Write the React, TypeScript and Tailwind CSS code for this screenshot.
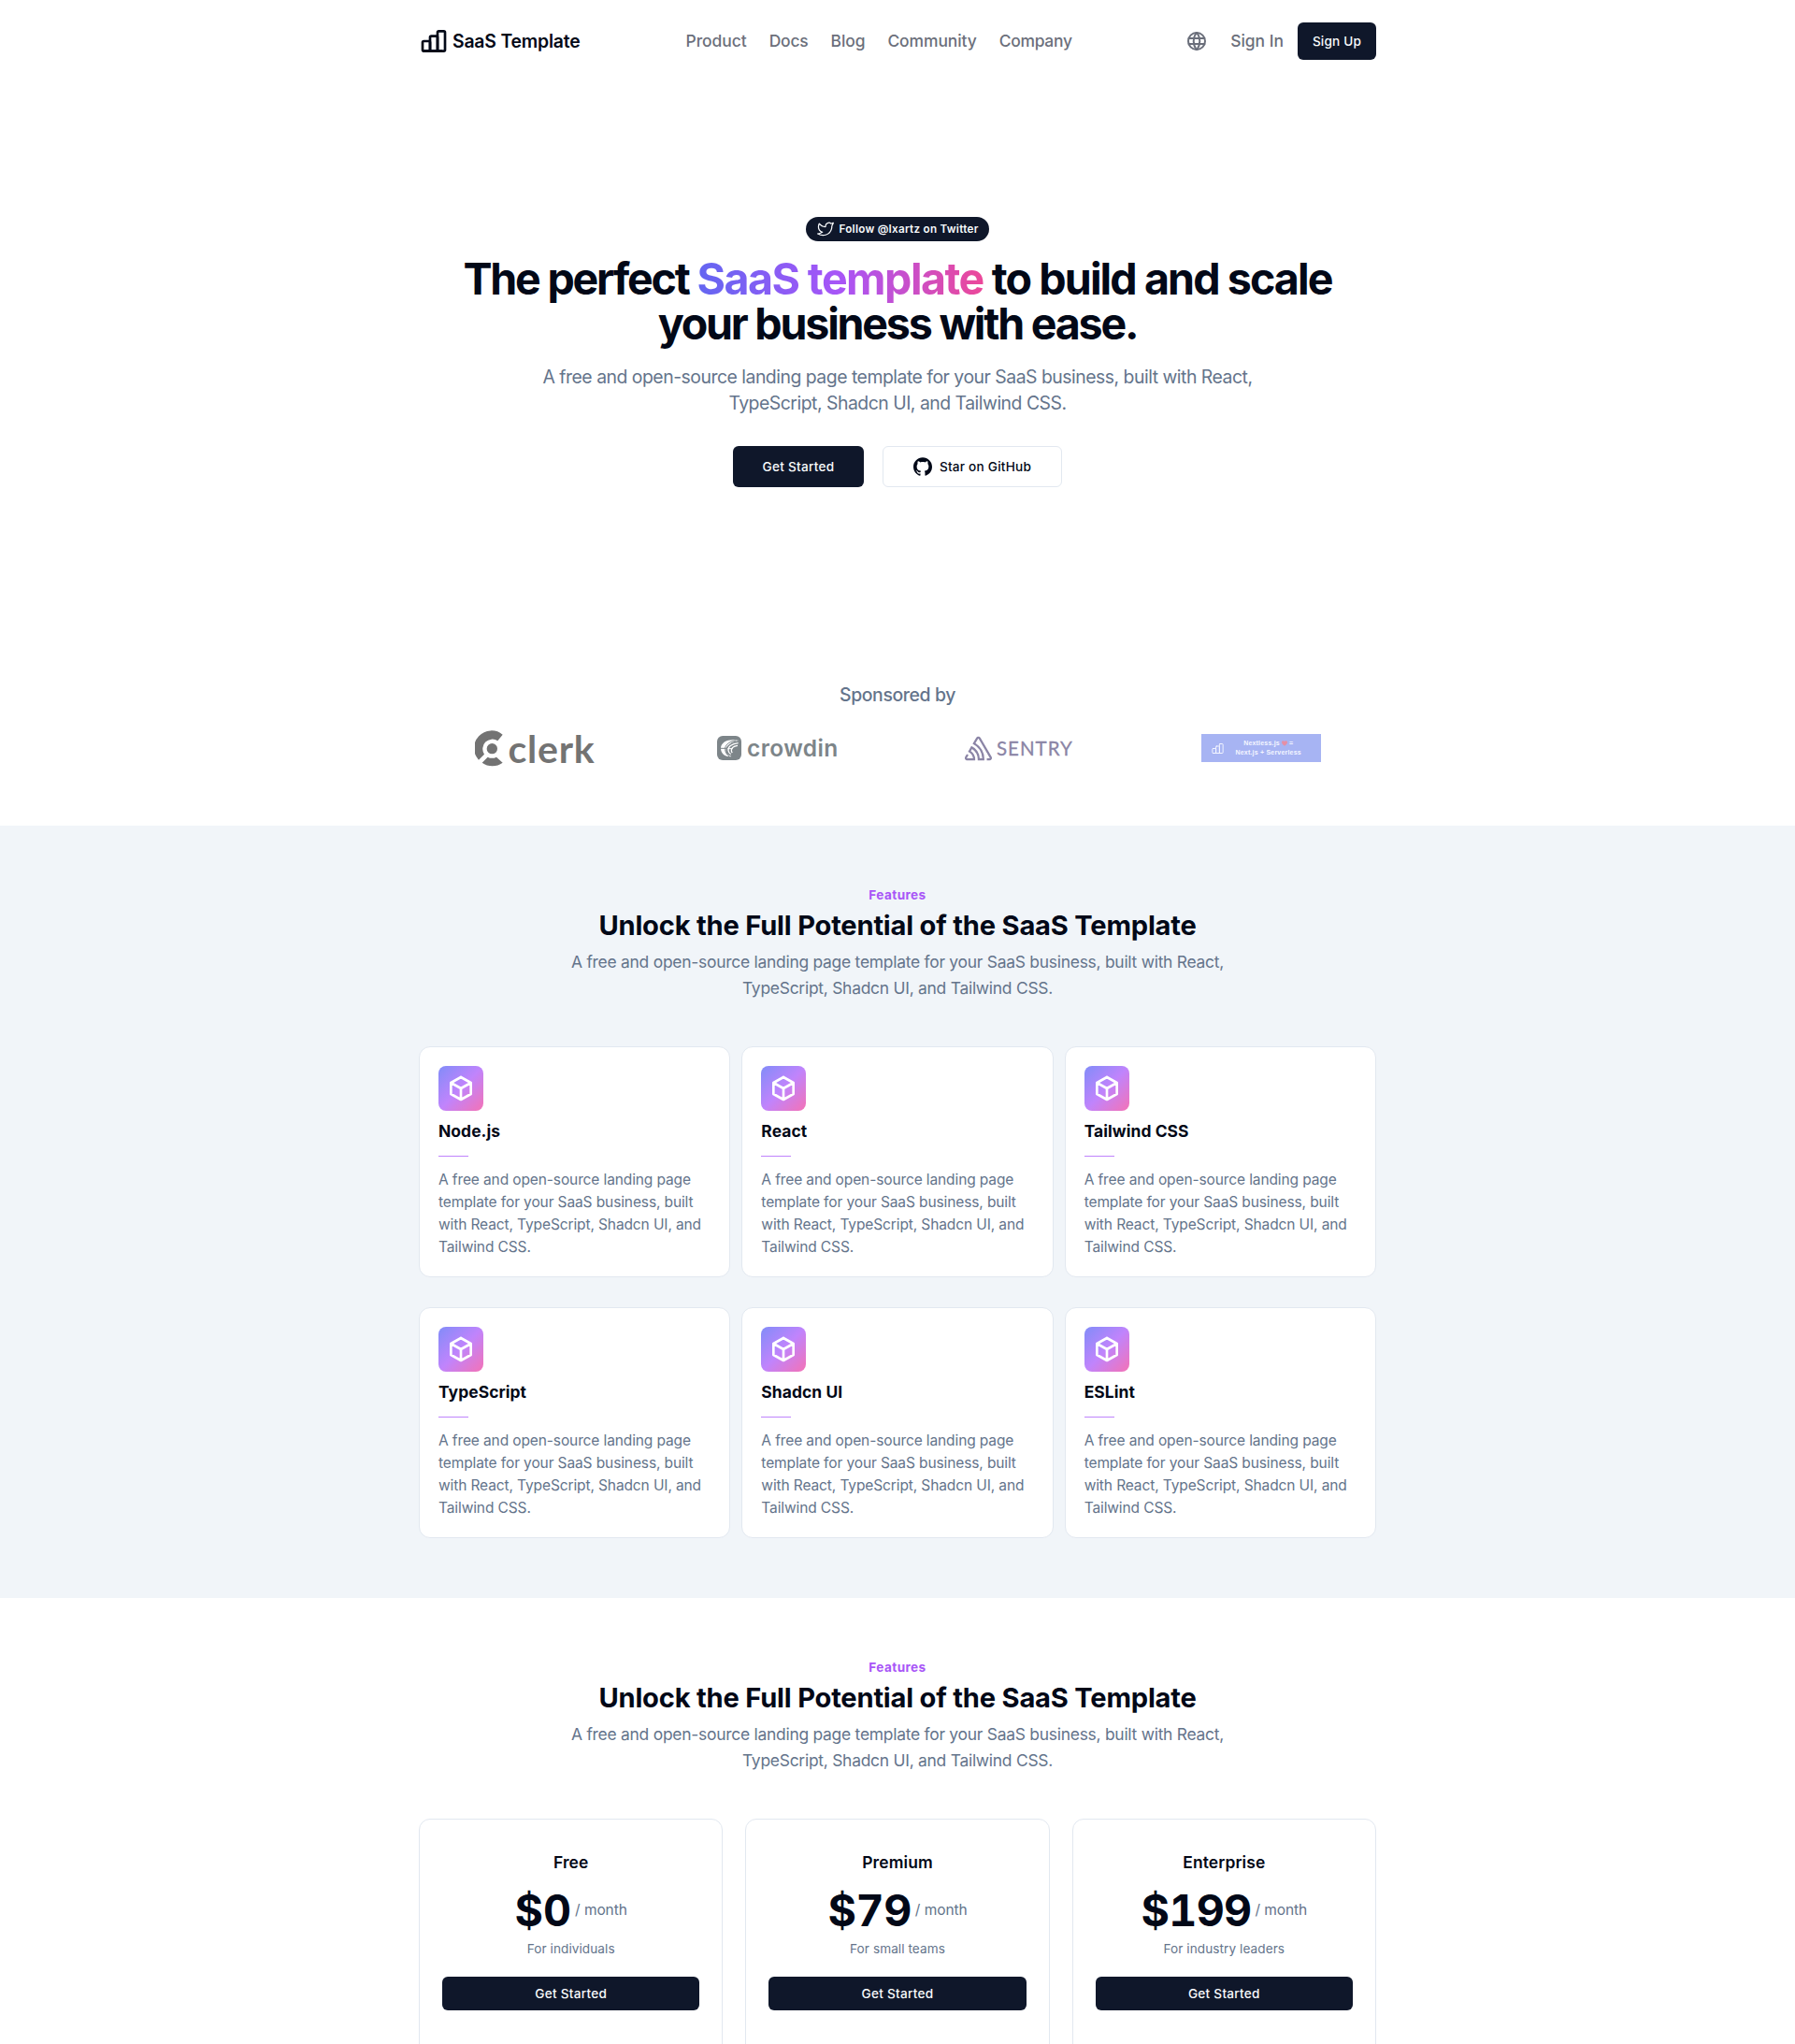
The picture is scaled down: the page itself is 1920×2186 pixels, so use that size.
import React from "react";
import type { ReactNode } from "react";
import { SiGithub, SiSentry } from "react-icons/si";

const NAV = [
  { label: "Product", cls: "tracking-[-0.04px]" },
  { label: "Docs", cls: "tracking-[-0.15px]" },
  { label: "Blog", cls: "tracking-[-0.1px]" },
  { label: "Community", cls: "tracking-[-0.08px]" },
  { label: "Company", cls: "tracking-[-0.27px]" },
];

const FEATURES = ["Node.js", "React", "Tailwind CSS", "TypeScript", "Shadcn UI", "ESLint"];

const PLANS = [
  { name: "Free", price: "$0", note: "For individuals", cls: "tracking-[0px]" },
  { name: "Premium", price: "$79", note: "For small teams", cls: "tracking-[-0.4px]" },
  { name: "Enterprise", price: "$199", note: "For industry leaders", cls: "tracking-[-0.7px]" },
];

function BarsIcon({ className }: { className: string }) {
  return (
    <svg
      className={className}
      viewBox="0 0 24 24"
      fill="none"
      stroke="currentColor"
      strokeWidth="2"
      strokeLinecap="round"
      strokeLinejoin="round"
    >
      <rect x="3" y="12" width="6" height="8" rx="1" />
      <rect x="9" y="8" width="6" height="12" rx="1" />
      <rect x="15" y="4" width="6" height="16" rx="1" />
      <path d="M4 20h14" />
    </svg>
  );
}

function GlobeIcon() {
  return (
    <svg
      className="size-6"
      viewBox="0 0 24 24"
      fill="none"
      stroke="currentColor"
      strokeWidth="2"
      strokeLinecap="round"
      strokeLinejoin="round"
    >
      <circle cx="12" cy="12" r="9" />
      <path d="M3.6 9h16.8M3.6 15h16.8M11.5 3a17 17 0 0 0 0 18M12.5 3a17 17 0 0 1 0 18" />
    </svg>
  );
}

function TwitterIcon() {
  return (
    <svg
      className="mr-1 size-5"
      viewBox="0 0 24 24"
      fill="none"
      stroke="currentColor"
      strokeWidth="1.5"
      strokeLinecap="round"
      strokeLinejoin="round"
    >
      <path d="M22 4.01c-1 .49-1.98.689-3 .99-1.121-1.265-2.783-1.335-4.38-.737S11.977 6.323 12 8v1c-3.245.083-6.135-1.395-8-4 0 0-4.182 7.433 4 11-1.872 1.247-3.739 2.088-6 2 3.308 1.803 6.913 2.423 10.034 1.517 3.58-1.04 6.522-3.723 7.651-7.742a13.84 13.84 0 0 0 .497-3.753C20.18 7.773 21.692 5.25 22 4.009z" />
    </svg>
  );
}

function BoxIcon() {
  return (
    <svg
      className="size-8"
      viewBox="0 0 24 24"
      fill="none"
      stroke="currentColor"
      strokeWidth="2"
      strokeLinecap="round"
      strokeLinejoin="round"
    >
      <path d="M12 3l8 4.5v9L12 21l-8-4.5v-9L12 3M12 12l8-4.5M12 12v9M12 12L4 7.5" />
    </svg>
  );
}

function ClerkLogo() {
  return (
    <div className="flex h-10 w-32 items-center text-[#737373]">
      <svg className="h-10 w-[30px] shrink-0" viewBox="84 180 90 120" fill="currentColor">
        <path d="M173 197A56 56 0 0 0 96 278L114 260A31 31 0 0 1 157 217Z" />
        <path d="M107 287L125 269A31 31 0 0 0 153 269L173 287A56 56 0 0 1 107 287Z" />
        <circle cx="139" cy="242" r="17" />
      </svg>
      <span className="ml-[6px] pt-[1px] font-['Lato'] text-[41px] leading-10 font-bold tracking-[0.8px]">
        clerk
      </span>
    </div>
  );
}

function CrowdinLogo() {
  return (
    <div className="flex h-10 w-32 items-center text-[#7d8589]">
      <svg className="size-[26px] shrink-0" viewBox="0 0 78 78">
        <rect width="78" height="78" rx="18" fill="currentColor" />
        <path
          d="M70 15C40 8 12 18 12 40c0 17 13 27 32 27l2-2C28 62 24 46 32 34c8-11 22-17 38-19z"
          fill="#fff"
        />
        <path d="M12 40h22" stroke="currentColor" strokeWidth="3" />
        <path
          d="M60 15C36 18 24 32 26 44c1 10 5 16 14 22"
          fill="none"
          stroke="currentColor"
          strokeWidth="3"
        />
        <path
          d="M68 23C46 25 34 36 36 47c1 6 3 9 8 12M66 31c-14 2-21 8-20 17 0 2 1 4 3 6"
          fill="none"
          stroke="#fff"
          strokeWidth="4"
        />
        <path d="M34 41h16" stroke="#fff" strokeWidth="3" />
      </svg>
      <span className="ml-[6.500px] text-[24.5px] leading-10 font-semibold tracking-[0.4px]">crowdin</span>
    </div>
  );
}

function SentryLogo() {
  return (
    <div className="flex h-10 w-32 items-center pl-[6px] text-[#8b85a6]">
      <SiSentry className="size-[29px] shrink-0" />
      <span className="ml-[5.500px] font-['Lato'] text-[20.5px] leading-10 tracking-[1px] [-webkit-text-stroke:0.3px_currentColor]">
        SENTRY
      </span>
    </div>
  );
}

function NextlessBanner() {
  return (
    <div className="flex h-[30px] w-32 items-center bg-[#a7b4f3] text-[#f4f6ff]">
      <BarsIcon className="ml-[10px] size-[15px] shrink-0 [stroke-width:1.5px]" />
      <div className="ml-[12px] font-['Liberation_Sans'] text-[7px] leading-[10.3px] font-bold tracking-[0.2px] whitespace-nowrap">
        <div className="flex items-center justify-center">
          Nextless.js
          <svg className="mx-[2px] size-[6px]" viewBox="0 0 24 22" fill="#e58fa6">
            <path d="M12 22C4 15 0 11 0 6.500a6.500 6.500 0 0 1 12-3.500 6.500 6.500 0 0 1 12 3.500C24 11 20 15 12 22z" />
          </svg>
          =
        </div>
        <div>Next.js + Serverless</div>
      </div>
    </div>
  );
}

function SectionHeader() {
  return (
    <div className="mb-12 flex flex-col items-center text-center">
      <div className="text-[13.6px] leading-5 font-bold tracking-[0.4px] text-[#a855f7]">Features</div>
      <h2 className="mt-[5px] text-[29.1px] leading-9 font-bold tracking-[-0.2px]">
        Unlock the Full Potential of the SaaS Template
      </h2>
      <p className="mt-[7px] w-[720px] text-[17.46px] leading-7 tracking-[-0.26px] text-[#64748b]">
        A free and open-source landing page template for your SaaS business, built with React,
        <br />
        TypeScript, Shadcn UI, and Tailwind CSS.
      </p>
    </div>
  );
}

function Section({ className, children }: { className: string; children: ReactNode }) {
  return (
    <section className={className}>
      <div className="mx-auto w-[1024px]">
        <SectionHeader />
        {children}
      </div>
    </section>
  );
}

export default function App() {
  return (
    <div className="h-[2186px] w-[1920px] overflow-hidden bg-white font-['Inter',sans-serif] text-[#020817] antialiased">
      <header className="mx-auto flex h-[88px] w-[1024px] items-center">
        <div className="flex w-[285.5px] shrink-0 items-center">
          <BarsIcon className="mr-1 size-8" />
          <span className="text-[19.4px] leading-7 font-semibold tracking-[-0.2px]">SaaS Template</span>
        </div>
        <nav className="flex items-center gap-6 text-[17.46px] leading-7 font-[450] text-[#6b6f7b]">
          {NAV.map((n) => (
            <a key={n.label} className={n.cls}>
              {n.label}
            </a>
          ))}
        </nav>
        <div className="ml-auto flex items-center text-[#6b6f7b]">
          <GlobeIcon />
          <a className="ml-6 text-[17.46px] leading-7 font-[450] tracking-[0px]">Sign In</a>
          <button className="ml-[15px] h-10 w-[84px] rounded-md bg-[#0f172a] text-[13.6px] font-medium tracking-[0.19px] text-[#f8fafc]">
            Sign Up
          </button>
        </div>
      </header>

      <section className="flex h-[641px] flex-col items-center pt-36 text-center">
        <div className="flex h-[26px] w-[196px] items-center justify-center rounded-full bg-[#0f172a] text-[11.7px] font-semibold tracking-[0.26px] whitespace-nowrap text-[#f8fafc]">
          <TwitterIcon />
          <span className="pt-px">Follow @Ixartz on Twitter</span>
        </div>
        <h1 className="mt-4 text-[46.56px] leading-[48px] font-bold">
          <div className="tracking-[-1.89px]">
            <span className="tracking-[-2.2px]">The perfect </span>
            <span className="bg-[linear-gradient(to_right,#6366f1,#a855f7,#ec4899)] bg-clip-text tracking-[-1.53px] text-transparent">
              SaaS template
            </span>{" "}
            to build and scale
          </div>
          <div className="tracking-[-2.2px]">your business with ease.</div>
        </h1>
        <p className="mt-[19px] text-[19.4px] leading-7 tracking-[-0.49px] text-[#64748b]">
          A free and open-source landing page template for your SaaS business, built with React,
          <br />
          TypeScript, Shadcn UI, and Tailwind CSS.
        </p>
        <div className="mt-8 flex gap-5 text-[13.6px] font-medium">
          <button className="h-11 w-[140px] rounded-md bg-[#0f172a] tracking-[0.26px] text-[#f8fafc]">
            Get Started
          </button>
          <button className="flex h-11 w-48 items-center justify-center rounded-md border border-[#e2e8f0] tracking-[0.22px]">
            <SiGithub className="mr-2 size-5" />
            Star on GitHub
          </button>
        </div>
      </section>

      <section className="mx-auto h-[154px] w-[1024px]">
        <div className="text-center text-[19.4px] leading-7 font-medium tracking-[-0.38px] text-[#64748b]">
          Sponsored by
        </div>
        <div className="mt-[23px] grid grid-cols-4 place-items-center gap-3">
          <ClerkLogo />
          <CrowdinLogo />
          <SentryLogo />
          <NextlessBanner />
        </div>
      </section>

      <Section className="bg-[#f1f5f9] py-16">
        <div className="grid grid-cols-3 gap-x-3 gap-y-8">
          {FEATURES.map((f) => (
            <div key={f} className="rounded-xl border border-[#e2e8f0] bg-white p-5">
              <div className="flex size-12 items-center justify-center rounded-lg bg-[linear-gradient(to_bottom_right,#818cf8,#c084fc,#f472b6)] text-white">
                <BoxIcon />
              </div>
              <div className="mt-2 text-[17.46px] leading-7 font-bold tracking-[0.06px]">{f}</div>
              <div className="mt-3 mb-[13px] h-px w-8 bg-[#c084fc]" />
              <p className="-mb-px text-[15.52px] leading-6 tracking-[-0.12px] text-[#64748b]">
                A free and open-source landing page
                <br />
                template for your SaaS business, built
                <br />
                with React, TypeScript, Shadcn UI, and
                <br />
                Tailwind CSS.
              </p>
            </div>
          ))}
        </div>
      </Section>

      <Section className="py-16">
        <div className="grid grid-cols-3 gap-6">
          {PLANS.map((p) => (
            <div
              key={p.name}
              className="h-[400px] rounded-xl border border-[#e2e8f0] px-6 py-8 text-center"
            >
              <div className="text-[17.46px] leading-7 font-semibold tracking-[0.1px]">{p.name}</div>
              <div className="mt-[13px] flex h-12 items-center justify-center">
                <span className={`${p.cls} text-[46.56px] leading-[48px] font-bold tabular-nums`}>{p.price}</span>
                <span className="ml-1 text-[15.52px] leading-6 tracking-[-0.08px] text-[#64748b]">/ month</span>
              </div>
              <div className="mt-[7px] text-[13.6px] leading-5 tracking-[0.07px] text-[#64748b]">{p.note}</div>
              <button className="mt-5 h-9 w-full rounded-md bg-[#0f172a] text-[13.6px] font-medium tracking-[0.26px] text-[#f8fafc]">
                Get Started
              </button>
            </div>
          ))}
        </div>
      </Section>
    </div>
  );
}
